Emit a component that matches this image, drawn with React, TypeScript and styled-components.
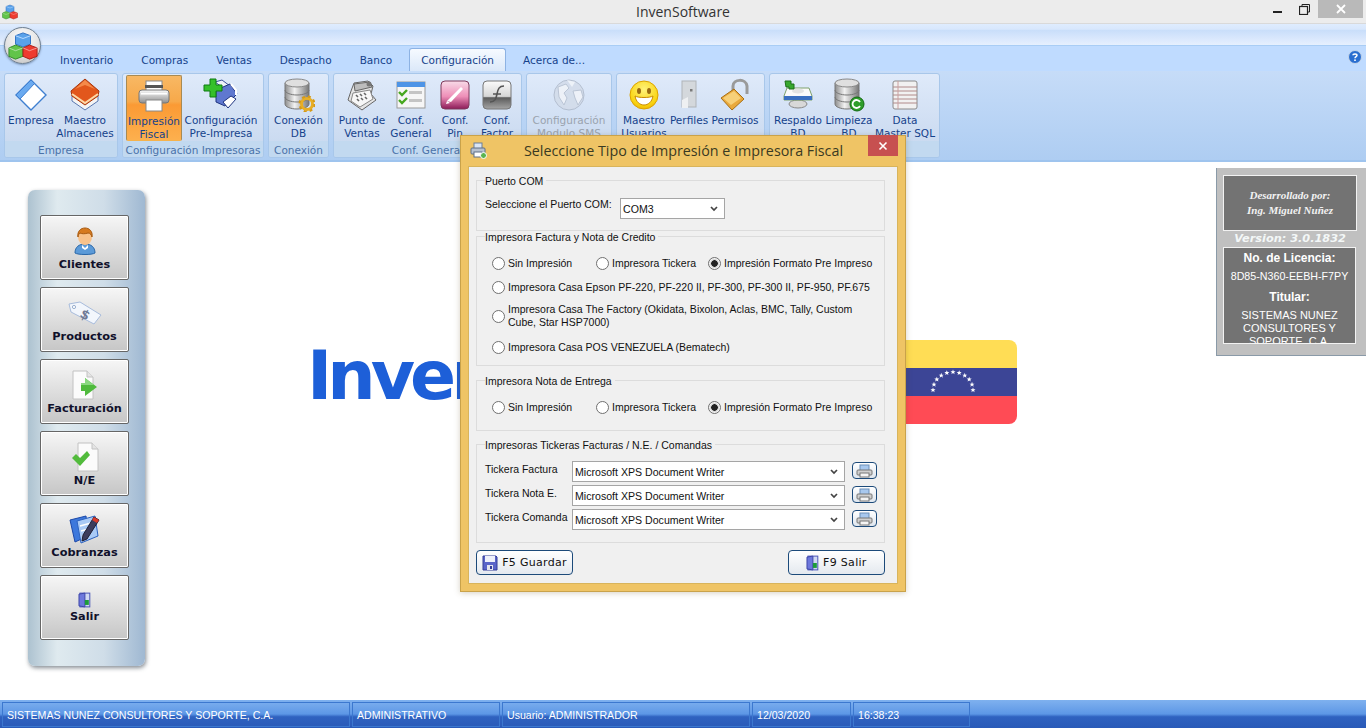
import React from "react";
import styled, { createGlobalStyle } from "styled-components";

const GlobalStyle = createGlobalStyle`
  html, body { margin: 0; padding: 0; background: #fff; overflow: hidden; }
  * { box-sizing: border-box; }
`;

/* ---------- icons ---------- */

const AppCubes = ({ size = 16 }: { size?: number }) => (
  <svg width={size} height={size} viewBox="0 0 32 32">
    <path d="M16 2l8 3v9l-8 3-8-3V5z" fill="#5aa2ea" stroke="#2f6fc0" />
    <path d="M8 15l8 3v9l-8 3-7-3v-9z" fill="#62c44a" stroke="#2f8a2a" />
    <path d="M23 15l8 3v9l-8 3-7-3v-9z" fill="#ee3b30" stroke="#a81c16" />
    <path d="M8 5l8 3 8-3" fill="none" stroke="#bcdcff" />
    <path d="M1 18l7 3 8-3M16 18l7 3 8-3" fill="none" stroke="#ffffff" strokeOpacity=".5" />
  </svg>
);

const EmpresaIcon = () => (
  <svg width="34" height="34" viewBox="0 0 34 34">
    <path d="M17 2l15 15-15 15L2 17z" fill="#fff" stroke="#3f7fd0" strokeWidth="1.4" />
    <path d="M17 2l3.5 3.5L6 21 2 17z" fill="#6aaaf0" stroke="#3f7fd0" />
  </svg>
);

const MaestroIcon = () => (
  <svg width="34" height="34" viewBox="0 0 34 34">
    <path d="M4 17v6l13 9 13-9v-6z" fill="#f4f4f4" stroke="#5a78b0" />
    <path d="M17 1L3 13l1 5 13 9 13-9 1-5z" fill="#e2571c" stroke="#a8360c" />
    <path d="M4 16l13 9 13-9" fill="none" stroke="#fcd9a8" strokeWidth="2" />
    <path d="M17 2L7 11l10-4 10 4z" fill="#f58a4a" />
  </svg>
);

const PrinterIcon = () => (
  <svg width="34" height="34" viewBox="0 0 34 34">
    <defs>
      <linearGradient id="prn" x1="0" y1="0" x2="0" y2="1">
        <stop offset="0" stopColor="#fafafa" />
        <stop offset="1" stopColor="#8f8f8f" />
      </linearGradient>
    </defs>
    <rect x="9" y="2" width="16" height="11" fill="#fff" stroke="#888" />
    <rect x="8" y="6" width="18" height="3" fill="#555" />
    <rect x="2" y="11" width="30" height="13" rx="3" fill="url(#prn)" stroke="#777" />
    <rect x="9" y="21" width="16" height="11" fill="#fff" stroke="#888" />
    <rect x="4" y="14" width="26" height="1.5" fill="#fff" />
  </svg>
);

const AddPrinterIcon = () => (
  <svg width="36" height="34" viewBox="0 0 36 34">
    <path d="M12 4l7-2 12 9-5 3z" fill="#eef2fa" stroke="#3a4f9a" />
    <path d="M13 12l14-6 7 10-12 12-9-4z" fill="#5f78d0" stroke="#1f3480" />
    <path d="M20 24l8-6 5 3-8 9z" fill="#fff" stroke="#1f3480" />
    <path d="M28 6l5 6v5" fill="none" stroke="#fff" strokeWidth="2" />
    <path d="M7 1h6v6h6v6h-6v6H7v-6H1V7h6z" fill="#35c02a" stroke="#0e7a12" />
  </svg>
);

const DbIcon = ({ badge }: { badge: "gear" | "refresh" }) => (
  <svg width="32" height="34" viewBox="0 0 32 34">
    <defs>
      <linearGradient id={"cyl" + badge} x1="0" y1="0" x2="1" y2="0">
        <stop offset="0" stopColor="#8d8d8d" />
        <stop offset=".4" stopColor="#f2f2f2" />
        <stop offset="1" stopColor="#777" />
      </linearGradient>
    </defs>
    <path d="M2 5v21c0 3 6 5 12 5s12-2 12-5V5z" fill={`url(#cyl${badge})`} stroke="#777" />
    <ellipse cx="14" cy="5" rx="12" ry="4" fill="#dfdfdf" stroke="#888" />
    <path d="M2 12c0 3 6 5 12 5s12-2 12-5M2 19c0 3 6 5 12 5s12-2 12-5" fill="none" stroke="#777" />
    {badge === "gear" ? (
      <g>
        <circle cx="24" cy="26" r="5.5" fill="none" stroke="#e8ae24" strokeWidth="3" />
        <circle cx="24" cy="26" r="7.5" fill="none" stroke="#d69a16" strokeWidth="2" strokeDasharray="3 3" />
      </g>
    ) : (
      <g>
        <circle cx="24" cy="26" r="7" fill="#2f9e2b" stroke="#126a12" />
        <path d="M27 24a4 4 0 1 0 0 4" fill="none" stroke="#fff" strokeWidth="1.8" />
      </g>
    )}
  </svg>
);

const RegisterIcon = () => (
  <svg width="32" height="32" viewBox="0 0 32 32">
    <path d="M8 4l14-2 5 5-2 8 5 6-14 10L2 21l3-9z" fill="#e4e4e4" stroke="#666" />
    <path d="M8 5l16-2 2 5-17 4z" fill="#bdbdbd" stroke="#666" />
    <path d="M7 14l17-3 3 9-13 8-9-6z" fill="#f7f7f7" stroke="#888" />
    <path d="M10 16l2 2M14 15l2 2M18 14l2 2M11 20l2 2M15 19l2 2M19 18l2 2" stroke="#666" strokeWidth="1.6" />
    <circle cx="23" cy="5" r="2.5" fill="#777" />
  </svg>
);

const ChecklistIcon = () => (
  <svg width="30" height="28" viewBox="0 0 30 28">
    <rect x="1" y="1" width="28" height="26" fill="#f6f6f6" stroke="#9a9a9a" />
    <rect x="1" y="1" width="28" height="5" fill="#4e94e6" />
    <rect x="13" y="10" width="13" height="3" fill="#c4c4c4" />
    <rect x="13" y="18" width="13" height="3" fill="#c4c4c4" />
    <path d="M3 11l3 3 5-5M3 19l3 3 5-5" fill="none" stroke="#46a71f" strokeWidth="2.4" />
  </svg>
);

const PinIcon = () => (
  <svg width="30" height="30" viewBox="0 0 30 30">
    <defs>
      <linearGradient id="pin" x1="0" y1="0" x2="0" y2="1">
        <stop offset="0" stopColor="#f8dbe8" />
        <stop offset=".55" stopColor="#ee8fb8" />
        <stop offset="1" stopColor="#8c1b58" />
      </linearGradient>
    </defs>
    <rect x="1" y="1" width="28" height="28" rx="4" fill="url(#pin)" stroke="#7d3a5c" />
    <path d="M7 21L21 7l2 2L11 22z" fill="#fff" />
    <path d="M7 21l-1 3 4-1" fill="#fff" />
  </svg>
);

const FlashIcon = () => (
  <svg width="30" height="30" viewBox="0 0 30 30">
    <defs>
      <linearGradient id="fls" x1="0" y1="0" x2="0" y2="1">
        <stop offset="0" stopColor="#fbfbfb" />
        <stop offset=".55" stopColor="#d6d6d6" />
        <stop offset=".6" stopColor="#5c5c5c" />
        <stop offset="1" stopColor="#a5a5a5" />
      </linearGradient>
    </defs>
    <rect x="1" y="1" width="28" height="28" rx="4" fill="url(#fls)" stroke="#777" />
    <path d="M22 6c-5 0-6 3-7 8s-2 8-7 8M11 14h8" fill="none" stroke="#555" strokeWidth="1.6" />
  </svg>
);

const GlobeIcon = () => (
  <svg width="34" height="34" viewBox="0 0 34 34">
    <circle cx="17" cy="17" r="15" fill="#d3dcea" stroke="#aeb9ca" />
    <path d="M6 9l8-3 3 4-5 5 3 5-3 7-5-8zM21 13l8-1 2 7-5 8-3-7z" fill="#f1f4f9" stroke="#b6c0d0" />
    <path d="M15 2l8 2-3 5z" fill="#f1f4f9" />
  </svg>
);

const SmileyIcon = () => (
  <svg width="30" height="30" viewBox="0 0 30 30">
    <defs>
      <radialGradient id="smi" cx=".5" cy=".3" r=".8">
        <stop offset="0" stopColor="#fff27a" />
        <stop offset=".7" stopColor="#f9d410" />
        <stop offset="1" stopColor="#e8a500" />
      </radialGradient>
    </defs>
    <circle cx="15" cy="15" r="14" fill="url(#smi)" stroke="#dca300" />
    <ellipse cx="10" cy="11" rx="2" ry="3" fill="#9a6a10" />
    <ellipse cx="20" cy="11" rx="2" ry="3" fill="#9a6a10" />
    <path d="M6 16c3 2 15 2 18 0-1 6-5 9-9 9s-8-3-9-9z" fill="#fff" stroke="#c98a00" />
  </svg>
);

const DoorGreyIcon = () => (
  <svg width="16" height="30" viewBox="0 0 16 30">
    <rect x="1" y="1" width="14" height="26" fill="#d4d8dc" stroke="#b0b4b8" />
    <path d="M1 20l6-3v11H1z" fill="#eef0f2" />
    <rect x="9" y="9" width="2.5" height="2.5" fill="#7a7a7a" />
  </svg>
);

const LockIcon = () => (
  <svg width="30" height="34" viewBox="0 0 30 34">
    <path d="M13 14V8c0-7 13-8 14 0v8" fill="none" stroke="#9a9a9a" strokeWidth="3" />
    <path d="M1 20l13-9 10 10-12 11z" fill="#e9a93c" stroke="#a86f14" />
    <path d="M3 20l11-7 7 7-10 7z" fill="#f7d078" />
  </svg>
);

const BackupIcon = () => (
  <svg width="30" height="30" viewBox="0 0 30 30">
    <ellipse cx="15" cy="24" rx="9" ry="4" fill="#d8d8d8" stroke="#888" />
    <path d="M4 8h22l3 8v4H1v-4z" fill="#fafafa" stroke="#7da06a" />
    <path d="M1 16h28v4H1z" fill="#3a6fc0" />
    <ellipse cx="15" cy="11" rx="6" ry="2.5" fill="#e3e3e3" />
    <path d="M2 1h6v3h3v5H6V7H3z" fill="#37a82e" stroke="#1c6e18" />
  </svg>
);

const NotepadIcon = () => (
  <svg width="28" height="30" viewBox="0 0 28 30">
    <rect x="2" y="1" width="24" height="28" rx="2" fill="#f1f1f1" stroke="#8a8a8a" />
    <path d="M2 7h24M2 11h24M2 15h24M2 19h24M2 23h24" stroke="#b08a8a" />
    <path d="M7 1v28" stroke="#c9a0a0" />
  </svg>
);

const UserIcon = () => (
  <svg width="22" height="28" viewBox="0 0 22 28">
    <path d="M1 26c0-6 4-9 10-9s10 3 10 9c-3 2-17 2-20 0z" fill="#5b9ad8" stroke="#2a67a8" />
    <path d="M8 18l3 3 3-3v3l-3 2-3-2z" fill="#fff" />
    <ellipse cx="11" cy="10" rx="7" ry="8" fill="#f8c28a" />
    <path d="M4 10c-1-6 3-9 7-9s8 3 7 9c-1-3-2-4-4-4-3 1-6 1-8 0-1 1-2 2-2 4z" fill="#d67a1e" stroke="#a85a10" />
  </svg>
);

const TagIcon = () => (
  <svg width="34" height="24" viewBox="0 0 34 24">
    <path d="M1 3l11-2 21 13-7 9L3 11z" fill="#f2f6fc" stroke="#a8bcdc" />
    <circle cx="6" cy="6" r="1.6" fill="#fff" stroke="#9ab0d0" />
    <text x="13" y="18" fontFamily="DejaVu Sans" fontWeight="700" fontSize="13" fill="#6f7a95" transform="rotate(30 17 13)">$</text>
  </svg>
);

const DocArrowIcon = () => (
  <svg width="26" height="30" viewBox="0 0 26 30">
    <path d="M1 1h14l6 6v22H1z" fill="#fbfbfb" stroke="#c2c2c2" />
    <path d="M15 1v6h6" fill="#e4e4e4" stroke="#c2c2c2" />
    <path d="M9 13h4V8l12 9-12 9v-5H9z" fill="#4fba3d" />
    <path d="M9 13h4V8l9 7H9z" fill="#8ad880" />
  </svg>
);

const DocCheckIcon = () => (
  <svg width="28" height="30" viewBox="0 0 28 30">
    <path d="M7 1h14l6 6v22H7z" fill="#fbfbfb" stroke="#c2c2c2" />
    <path d="M21 1v6h6" fill="#e4e4e4" stroke="#c2c2c2" />
    <path d="M1 16l4-4 4 4 7-7 3 4-10 11z" fill="#52bb3c" />
  </svg>
);

const CobranzasIcon = () => (
  <svg width="32" height="32" viewBox="0 0 32 32">
    <path d="M1 7l16-4 2 20-13 6z" fill="#3d78dc" stroke="#1c48a8" />
    <path d="M8 8l18-5 3 20-17 7z" fill="#a9caf6" stroke="#2c62c0" />
    <path d="M11 13l11-3M12 18l11-3M13 23l7-2" stroke="#fff" strokeWidth="1.5" />
    <path d="M25 4l5 3-12 19-5 2 1-6z" fill="#3c3c5c" stroke="#1d1d33" />
    <path d="M25 4l5 3-2 3-5-3z" fill="#d83a2a" />
  </svg>
);

const DoorIcon = ({ size = 16 }: { size?: number }) => (
  <svg width={size * 0.8} height={size} viewBox="0 0 13 16">
    <rect x="2" y="1" width="10" height="14" fill="#cfd8f2" stroke="#4a55b8" />
    <path d="M1 2l6-1v14l-6-1z" fill="#6d78dc" stroke="#3d46a8" />
    <rect x="7" y="8" width="4" height="5" fill="#1d9c3a" />
  </svg>
);

const FloppyIcon = () => (
  <svg width="16" height="16" viewBox="0 0 16 16">
    <path d="M1 1h13l1 1v13H1z" fill="#5a64c8" stroke="#343c98" />
    <rect x="3" y="1" width="10" height="6" fill="#eef0fa" />
    <rect x="5" y="10" width="6" height="5" fill="#e4e4ec" />
    <rect x="8" y="11" width="2" height="3" fill="#343c98" />
  </svg>
);

const SmallPrinter = () => (
  <svg width="17" height="14" viewBox="0 0 17 14">
    <rect x="4" y="1" width="9" height="6" fill="#a8c8ee" stroke="#6d8fb8" />
    <rect x="1" y="6" width="15" height="5" rx="1" fill="#d0d0d0" stroke="#777" />
    <rect x="4" y="9" width="9" height="4" fill="#f5f5f5" stroke="#777" />
  </svg>
);

const TitlePrinter = () => (
  <svg width="17" height="17" viewBox="0 0 17 17">
    <rect x="4" y="1" width="8" height="6" fill="#dbe6f4" stroke="#6a7f9c" />
    <rect x="1" y="6" width="14" height="6" rx="1" fill="#b7c1cf" stroke="#5f6f86" />
    <rect x="4" y="10" width="8" height="5" fill="#fff" stroke="#5f6f86" />
    <circle cx="13.5" cy="13.5" r="3" fill="#5bb450" stroke="#fff" />
  </svg>
);

const Chevron = () => (
  <svg width="8" height="6" viewBox="0 0 8 6">
    <path d="M1 1l3 3 3-3" fill="none" stroke="#444" strokeWidth="1.7" />
  </svg>
);

const HelpIcon = () => (
  <svg width="14" height="14" viewBox="0 0 14 14">
    <circle cx="7" cy="7" r="6.5" fill="#2a6fd0" stroke="#c4d4e8" />
    <path d="M5 5.3C5 3.4 9 3.4 9 5.3 9 6.6 7 6.6 7 8.2" fill="none" stroke="#fff" strokeWidth="1.5" />
    <rect x="6.2" y="9.4" width="1.6" height="1.6" fill="#fff" />
  </svg>
);

const FlagArt = () => {
  const stars = Array.from({ length: 11 }, (_, i) => {
    const a = Math.PI - (i * Math.PI) / 10;
    return { x: 64 + Math.cos(a) * 20, y: 50 - Math.sin(a) * 18 };
  });
  return (
    <svg width="128" height="84" viewBox="0 0 128 84">
      <path d="M0 0h120a8 8 0 0 1 8 8v20H0z" fill="#ffdd55" />
      <rect y="28" width="128" height="28" fill="#3c4596" />
      <path d="M0 56h128v20a8 8 0 0 1-8 8H0z" fill="#ff4b55" />
      {stars.map((s, i) => (
        <path
          key={i}
          transform={`translate(${s.x} ${s.y})`}
          d="M0-2.6L.7-.8 2.5-.8 1.1.4 1.6 2.2 0 1.1-1.6 2.2-1.1.4-2.5-.8-.7-.8z"
          fill="#fff"
        />
      ))}
    </svg>
  );
};

/* ---------- data ---------- */

const tabs = ["Inventario", "Compras", "Ventas", "Despacho", "Banco", "Configuración", "Acerca de..."];

type RibbonItem = { label: React.ReactNode; w: number; icon: React.ReactNode; active?: boolean; off?: boolean };
type RibbonGroupData = { title: string; w: number; pad: number; items: RibbonItem[] };

const groups: RibbonGroupData[] = [
  {
    title: "Empresa", w: 114, pad: 0,
    items: [
      { label: "Empresa", w: 52, icon: <EmpresaIcon /> },
      { label: <>Maestro<br />Almacenes</>, w: 56, icon: <MaestroIcon /> },
    ],
  },
  {
    title: "Configuración Impresoras", w: 142, pad: 3,
    items: [
      { label: <>Impresión<br />Fiscal</>, w: 56, icon: <PrinterIcon />, active: true },
      { label: <>Configuración<br />Pre-Impresa</>, w: 78, icon: <AddPrinterIcon /> },
    ],
  },
  {
    title: "Conexión", w: 61, pad: 0,
    items: [{ label: <>Conexión<br />DB</>, w: 59, icon: <DbIcon badge="gear" /> }],
  },
  {
    title: "Conf. General", w: 189, pad: 2,
    items: [
      { label: <>Punto de<br />Ventas</>, w: 52, icon: <RegisterIcon /> },
      { label: <>Conf.<br />General</>, w: 46, icon: <ChecklistIcon /> },
      { label: <>Conf.<br />Pin</>, w: 42, icon: <PinIcon /> },
      { label: <>Conf.<br />Factor</>, w: 42, icon: <FlashIcon /> },
    ],
  },
  {
    title: "SMS", w: 86, pad: 1,
    items: [{ label: <>Configuración<br />Modulo SMS</>, w: 82, icon: <GlobeIcon />, off: true }],
  },
  {
    title: "Usuarios", w: 149, pad: 1,
    items: [
      { label: <>Maestro<br />Usuarios</>, w: 52, icon: <SmileyIcon /> },
      { label: "Perfiles", w: 38, icon: <DoorGreyIcon /> },
      { label: "Permisos", w: 54, icon: <LockIcon /> },
    ],
  },
  {
    title: "Respaldo", w: 171, pad: 0,
    items: [
      { label: <>Respaldo<br />BD</>, w: 56, icon: <BackupIcon /> },
      { label: <>Limpieza<br />BD</>, w: 46, icon: <DbIcon badge="refresh" /> },
      { label: <>Data<br />Master SQL</>, w: 66, icon: <NotepadIcon /> },
    ],
  },
];

const sideButtons = [
  { label: "Clientes", icon: <UserIcon /> },
  { label: "Productos", icon: <TagIcon /> },
  { label: "Facturación", icon: <DocArrowIcon /> },
  { label: "N/E", icon: <DocCheckIcon /> },
  { label: "Cobranzas", icon: <CobranzasIcon /> },
  { label: "Salir", icon: <DoorIcon />, compact: true },
];

const statusCells = [
  { text: "SISTEMAS NUNEZ CONSULTORES Y SOPORTE, C.A.", w: 348 },
  { text: "ADMINISTRATIVO", w: 148 },
  { text: "Usuario: ADMINISTRADOR", w: 248 },
  { text: "12/03/2020", w: 99 },
  { text: "16:38:23", w: 117 },
];

const tickeras = ["Tickera Factura", "Tickera Nota E.", "Tickera Comanda"];

/* ---------- app ---------- */

const PrintOptions = ({ name }: { name: string }) => (
  <OptionRow>
    <RadioLabel><Radio name={name} />Sin Impresión</RadioLabel>
    <RadioLabel><Radio name={name} />Impresora Tickera</RadioLabel>
    <RadioLabel><Radio name={name} defaultChecked />Impresión Formato Pre Impreso</RadioLabel>
  </OptionRow>
);

const App = () => {
  return (
    <Page>
      <GlobalStyle />
      <TitleBar>
        <TitleIcon><AppCubes /></TitleIcon>
        <TitleText>InvenSoftware</TitleText>
        <WindowButtons>
          <WinButton>
            <svg width="10" height="10" viewBox="0 0 10 10"><rect y="7" width="9" height="2" fill="#222" /></svg>
          </WinButton>
          <WinButton>
            <svg width="11" height="11" viewBox="0 0 11 11">
              <path d="M3 2.5V.5h7.5V8H8.5" fill="none" stroke="#222" />
              <rect x=".5" y="2.5" width="8" height="8" fill="none" stroke="#222" strokeWidth="1.2" />
            </svg>
          </WinButton>
          <WinClose>
            <svg width="10" height="10" viewBox="0 0 10 10"><path d="M1 1l8 8M9 1l-8 8" stroke="#fff" strokeWidth="1.8" /></svg>
          </WinClose>
        </WindowButtons>
      </TitleBar>

      <QuickBar />
      <Orb><AppCubes size={30} /></Orb>

      <TabStrip>
        {tabs.map((t) => (
          <Tab key={t} $active={t === "Configuración"}>{t}</Tab>
        ))}
        <HelpSlot><HelpIcon /></HelpSlot>
      </TabStrip>

      <Ribbon>
        {groups.map((g) => (
          <RibbonGroup key={g.title} $w={g.w}>
            <GroupBody $pad={g.pad}>
              {g.items.map((it, i) => (
                <RibbonButton key={i} $w={it.w} $active={it.active} $off={it.off}>
                  <RibbonIcon $off={it.off}>{it.icon}</RibbonIcon>
                  <span>{it.label}</span>
                </RibbonButton>
              ))}
            </GroupBody>
            <GroupTitle>{g.title}</GroupTitle>
          </RibbonGroup>
        ))}
      </Ribbon>

      <Main>
        <Sidebar>
          {sideButtons.map((b) => (
            <SideButton key={b.label} $compact={b.compact}>
              <SideIcon $compact={b.compact}>{b.icon}</SideIcon>
              {b.label}
            </SideButton>
          ))}
        </Sidebar>

        <Logo>
          <LogoText>InvenSoftware</LogoText>
          <FlagArt />
        </Logo>

        <LicenseBox>
          <DevPanel>Desarrollado por:<br />Ing. Miguel Nuñez</DevPanel>
          <Version>Version: 3.0.1832</Version>
          <LicensePanel>
            <LicenseHead>No. de Licencia:</LicenseHead>
            <LicenseText>8D85-N360-EEBH-F7PY</LicenseText>
            <LicenseHead $top={7}>Titular:</LicenseHead>
            <LicenseText $top={5} $big>SISTEMAS NUNEZ CONSULTORES Y SOPORTE, C.A.</LicenseText>
          </LicensePanel>
        </LicenseBox>
      </Main>

      <StatusBar>
        {statusCells.map((c) => (
          <StatusCell key={c.text} $w={c.w}>{c.text}</StatusCell>
        ))}
      </StatusBar>

      <Dialog>
        <DialogHead>
          <DialogIcon><TitlePrinter /></DialogIcon>
          <DialogTitle>Seleccione Tipo de Impresión e Impresora Fiscal</DialogTitle>
          <DialogClose>
            <svg width="10" height="10" viewBox="0 0 10 10"><path d="M1.5 1.5l7 7M8.5 1.5l-7 7" stroke="#fff" strokeWidth="1.6" /></svg>
          </DialogClose>
        </DialogHead>
        <DialogBody>
          <Box $h={57} $mt={0}>
            <Legend>Puerto COM</Legend>
            <ComRow>
              <ComLabel>Seleccione el Puerto COM:</ComLabel>
              <Combo $w={105}>COM3<Chevron /></Combo>
            </ComRow>
          </Box>

          <Box $h={136} $mt={-1}>
            <Legend>Impresora Factura y Nota de Credito</Legend>
            <Options $top={13}>
              <PrintOptions name="factura" />
              <RadioLabel $mt={8}><Radio name="factura" />Impresora Casa Epson PF-220, PF-220 II, PF-300, PF-300 II, PF-950, PF.675</RadioLabel>
              <RadioLabel $mt={8} $wrap>
                <Radio name="factura" />
                <span>Impresora Casa The Factory (Okidata, Bixolon, Aclas, BMC, Tally, Custom Cube, Star HSP7000)</span>
              </RadioLabel>
              <RadioLabel $mt={10}><Radio name="factura" />Impresora Casa POS VENEZUELA (Bematech)</RadioLabel>
            </Options>
          </Box>

          <Box $h={57} $mt={8}>
            <Legend>Impresora Nota de Entrega</Legend>
            <Options $top={13}>
              <PrintOptions name="nota" />
            </Options>
          </Box>

          <Box $h={105} $mt={7}>
            <Legend>Impresoras Tickeras Facturas / N.E. / Comandas</Legend>
            <TickeraList>
              {tickeras.map((t) => (
                <TickeraRow key={t}>
                  <TickeraLabel>{t}</TickeraLabel>
                  <Combo $w={273}>Microsoft XPS Document Writer<Chevron /></Combo>
                  <MiniButton><SmallPrinter /></MiniButton>
                </TickeraRow>
              ))}
            </TickeraList>
          </Box>

          <DialogFooter>
            <ActionButton $w={97}><FloppyIcon />F5 Guardar</ActionButton>
            <ActionButton $w={97}><DoorIcon />F9 Salir</ActionButton>
          </DialogFooter>
        </DialogBody>
      </Dialog>
    </Page>
  );
};

export default App;

/* ---------- styles ---------- */

const uiFont = `"DejaVu Sans", sans-serif`;
const dlgFont = `"Liberation Sans", Arial, sans-serif`;

const Page = styled.div`
  position: relative;
  width: 1366px;
  height: 728px;
  display: flex;
  flex-direction: column;
  overflow: hidden;
  background: #fff;
  font-family: ${uiFont};
`;

const TitleBar = styled.div`
  height: 24px;
  display: flex;
  align-items: center;
  background: #ececec;
  border-bottom: 1px solid #d9d9d9;
`;

const TitleIcon = styled.div`
  width: 20px;
  padding-left: 2px;
  display: flex;
`;

const TitleText = styled.div`
  flex: 1;
  text-align: center;
  padding-left: 81px;
  font: 14px "Open Sans", sans-serif;
  color: #333;
`;

const WindowButtons = styled.div`
  display: flex;
  align-self: flex-start;
  margin-right: 3px;
`;

const WinButton = styled.div`
  width: 26px;
  height: 18px;
  display: flex;
  align-items: center;
  justify-content: center;
`;

const WinClose = styled.div`
  width: 45px;
  height: 18px;
  margin-left: 1px;
  background: #b9b9b9;
  display: flex;
  align-items: center;
  justify-content: center;
`;

const QuickBar = styled.div`
  height: 22px;
  background: linear-gradient(#dfecfe 0%, #d8e7fc 25%, #c9defa 30%, #dce9fd 75%, #e6f0fe 100%);
  border-bottom: 1px solid #a9cdf5;
`;

const Orb = styled.div`
  position: absolute;
  z-index: 2;
  left: 4px;
  top: 27px;
  width: 37px;
  height: 37px;
  border-radius: 50%;
  display: flex;
  align-items: center;
  justify-content: center;
  background: radial-gradient(circle at 50% 30%, #fdfdfd 0%, #e3e3e3 55%, #bdbdbd 100%);
  border: 1px solid #6f7f90;
  box-shadow: 0 1px 2px rgba(60, 80, 110, 0.5);
`;

const TabStrip = styled.div`
  height: 25px;
  display: flex;
  align-items: flex-end;
  gap: 6px;
  padding-left: 49px;
  background: #bfdbff;
  position: relative;
`;

const Tab = styled.div<{ $active?: boolean }>`
  height: 23px;
  padding: 0 11px;
  display: flex;
  align-items: center;
  font-size: 10.5px;
  color: #15428b;
  border-radius: 3px 3px 0 0;
  ${(p) =>
    p.$active &&
    `
    background: linear-gradient(#f6faff, #dbe8f9);
    border: 1px solid #8db2e3;
    border-bottom: none;
  `}
`;

const HelpSlot = styled.div`
  position: absolute;
  right: 4px;
  top: 4px;
  display: flex;
`;

const Ribbon = styled.div`
  height: 91px;
  display: flex;
  gap: 4px;
  padding: 2px 0 0 4px;
  background: linear-gradient(#c6dcf8, #aecdf2);
  border-bottom: 2px solid #9fc4ee;
`;

const RibbonGroup = styled.div<{ $w: number }>`
  width: ${(p) => p.$w}px;
  height: 85px;
  display: flex;
  flex-direction: column;
  border: 1px solid #a8c7ea;
  border-radius: 3px;
  overflow: hidden;
  background: linear-gradient(#dfeafa, #c6d7ee);
`;

const GroupBody = styled.div<{ $pad: number }>`
  flex: 1;
  display: flex;
  padding: 1px 0 0 ${(p) => p.$pad}px;
`;

const RibbonButton = styled.div<{ $w: number; $active?: boolean; $off?: boolean }>`
  width: ${(p) => p.$w}px;
  height: 66px;
  flex: none;
  display: flex;
  flex-direction: column;
  align-items: center;
  text-align: center;
  font-size: 10.5px;
  line-height: 13px;
  white-space: nowrap;
  color: ${(p) => (p.$off ? "#9aa3ae" : "#15428b")};
  ${(p) =>
    p.$active &&
    `
    background: linear-gradient(#f8b864 0%, #f7a94a 40%, #fb9a34 45%, #fdb04e 100%);
    border: 1px solid #a88a52;
    border-bottom-color: #f5b24c;
    border-radius: 2px;
  `}
`;

const RibbonIcon = styled.div<{ $off?: boolean }>`
  height: 39px;
  flex: none;
  display: flex;
  align-items: center;
  justify-content: center;
  opacity: ${(p) => (p.$off ? 0.85 : 1)};
`;

const GroupTitle = styled.div`
  height: 16px;
  background: #c2d9f0;
  text-align: center;
  font-size: 10.5px;
  line-height: 18px;
  color: #4a72a8;
  white-space: nowrap;
`;

const Main = styled.div`
  flex: 1;
  display: flex;
  align-items: flex-start;
  background: #fff;
`;

const Sidebar = styled.div`
  width: 117px;
  height: 476px;
  margin: 28px 0 0 28px;
  padding: 25px 0 0 12px;
  flex: none;
  display: flex;
  flex-direction: column;
  gap: 7px;
  border-radius: 7px;
  background: linear-gradient(90deg, #adc2d0 0%, #dfeaef 25%, #cfdde8 65%, #9fb8d2 100%);
  box-shadow: 1px 2px 4px rgba(70, 80, 90, 0.65);
`;

const SideButton = styled.div<{ $compact?: boolean }>`
  width: 89px;
  height: 65px;
  flex: none;
  display: flex;
  flex-direction: column;
  align-items: center;
  justify-content: ${(p) => (p.$compact ? "center" : "flex-end")};
  padding-bottom: ${(p) => (p.$compact ? "2px" : "8px")};
  border: 1px solid #666;
  border-radius: 2px;
  box-shadow: inset 0 0 0 1px #fff;
  background: linear-gradient(#f6f6f6, #c6c6c6);
  font-size: 11.3px;
  font-weight: 700;
  color: #10102a;
  white-space: nowrap;
`;

const SideIcon = styled.div<{ $compact?: boolean }>`
  height: ${(p) => (p.$compact ? "20px" : "34px")};
  display: flex;
  align-items: center;
  justify-content: center;
`;

const Logo = styled.div`
  margin: 178px 0 0 162px;
  display: flex;
  flex: none;
`;

const LogoText = styled.div`
  width: 582px;
  height: 84px;
  overflow: hidden;
  white-space: nowrap;
  font: 700 68px/72px "DejaVu Sans", sans-serif;
  letter-spacing: -5px;
  color: #1d5fd8;
`;

const LicenseBox = styled.div`
  margin: 6px 0 0 auto;
  width: 150px;
  height: 188px;
  padding: 7px 0 0 6px;
  flex: none;
  background: #c0c0c0;
  border-left: 1px solid #8a9aa8;
  border-bottom: 1px solid #8a9aa8;
  display: flex;
  flex-direction: column;
  align-items: flex-start;
`;

const DevPanel = styled.div`
  width: 134px;
  height: 56px;
  display: flex;
  align-items: center;
  justify-content: center;
  text-align: center;
  background: #737373;
  border: 1px solid #f2f2f2;
  font: italic 700 11px/15px "Liberation Serif", serif;
  color: #f2f2f2;
`;

const Version = styled.div`
  width: 134px;
  height: 16px;
  text-align: center;
  font: italic 700 11.3px/15px "DejaVu Sans", sans-serif;
  color: #f3f7f7;
`;

const LicensePanel = styled.div`
  width: 133px;
  height: 97px;
  overflow: hidden;
  padding-top: 3px;
  text-align: center;
  background: #737373;
  border: 1px solid #f2f2f2;
  color: #fff;
  font-family: ${dlgFont};
`;

const LicenseHead = styled.div<{ $top?: number }>`
  margin-top: ${(p) => p.$top ?? 0}px;
  font-size: 12px;
  font-weight: 700;
  line-height: 14px;
`;

const LicenseText = styled.div<{ $top?: number; $big?: boolean }>`
  margin-top: ${(p) => p.$top ?? 5}px;
  padding: 0 12px;
  margin-left: ${(p) => (p.$big ? "0" : "-12px")};
  margin-right: ${(p) => (p.$big ? "0" : "-12px")};
  font-size: ${(p) => (p.$big ? "11px" : "10.7px")};
  line-height: 13px;
`;

const StatusBar = styled.div`
  height: 28px;
  display: flex;
  gap: 2px;
  padding: 2px 0 1px 2px;
  background: linear-gradient(#7fb1ef 0%, #5d97e6 50%, #2f62c0 60%, #2a5ab8 100%);
`;

const StatusCell = styled.div<{ $w: number }>`
  width: ${(p) => p.$w}px;
  height: 25px;
  padding: 0 4px;
  display: flex;
  align-items: center;
  border: 1px solid #3c78cf;
  font: 10.6px ${dlgFont};
  color: #fff;
  white-space: nowrap;
`;

const Dialog = styled.div`
  position: absolute;
  left: 460px;
  top: 135px;
  width: 446px;
  height: 457px;
  display: flex;
  flex-direction: column;
  padding: 0 7px 7px;
  background: #efc465;
  border: 1px solid #c9a24a;
  box-shadow: 0 1px 6px rgba(90, 70, 20, 0.25);
`;

const DialogHead = styled.div`
  height: 30px;
  flex: none;
  display: flex;
  align-items: flex-start;
  position: relative;
`;

const DialogIcon = styled.div`
  padding: 6px 0 0 2px;
  display: flex;
`;

const DialogTitle = styled.div`
  flex: 1;
  text-align: center;
  padding: 5px 18px 0 0;
  font: 14.3px "Open Sans", sans-serif;
  color: #3a3a22;
  white-space: nowrap;
`;

const DialogClose = styled.div`
  position: absolute;
  right: 0;
  top: -1px;
  width: 30px;
  height: 21px;
  background: #c75050;
  display: flex;
  align-items: center;
  justify-content: center;
`;

const DialogBody = styled.div`
  flex: 1;
  padding: 7px 12px 0 7px;
  background: #f0f0f0;
  border: 1px solid #d8b45c;
  font: 10.5px ${dlgFont};
  color: #111;
`;

const Box = styled.fieldset<{ $h: number; $mt: number }>`
  height: ${(p) => p.$h}px;
  margin: ${(p) => p.$mt}px 0 0;
  padding: 0 0 0 8px;
  min-width: 0;
  border: 1px solid #dcdcdc;
`;

const Legend = styled.legend`
  position: relative;
  top: 1px;
  padding: 0 3px 0 0;
  line-height: 12px;
  font-size: 10.5px;
`;

const ComRow = styled.div`
  margin-top: 12px;
  display: flex;
`;

const ComLabel = styled.div`
  width: 135px;
  line-height: 13px;
`;

const Combo = styled.div<{ $w: number }>`
  width: ${(p) => p.$w}px;
  height: 21px;
  flex: none;
  padding: 0 6px 0 2px;
  display: flex;
  align-items: center;
  justify-content: space-between;
  background: #fff;
  border: 1px solid #a5a5a5;
  font-size: 10.6px;
`;

const Options = styled.div<{ $top?: number }>`
  padding: ${(p) => p.$top ?? 12}px 8px 0 7px;
  display: flex;
  flex-direction: column;
`;

const OptionRow = styled.div`
  display: grid;
  grid-template-columns: 104px 112px auto;
`;

const RadioLabel = styled.label<{ $mt?: number; $wrap?: boolean }>`
  min-height: 16px;
  margin-top: ${(p) => p.$mt ?? 0}px;
  display: flex;
  align-items: center;
  gap: 3px;
  line-height: 13px;
  white-space: ${(p) => (p.$wrap ? "normal" : "nowrap")};
`;

const Radio = styled.input.attrs({ type: "radio" })`
  appearance: none;
  width: 13px;
  height: 13px;
  margin: 0;
  flex: none;
  border: 1px solid #707070;
  border-radius: 50%;
  background: #fff;
  &:checked {
    background: radial-gradient(circle, #222 0 3px, #c8c8c8 3.5px, #f4f4f4 5px);
  }
`;

const TickeraList = styled.div`
  margin-top: 11px;
  display: flex;
  flex-direction: column;
  gap: 3px;
`;

const TickeraRow = styled.div`
  display: flex;
  align-items: flex-start;
`;

const TickeraLabel = styled.div`
  width: 87px;
  line-height: 13px;
  padding-top: 2px;
  white-space: nowrap;
`;

const MiniButton = styled.div`
  width: 25px;
  height: 17px;
  margin: 1px 0 0 7px;
  display: flex;
  align-items: center;
  justify-content: center;
  border: 1px solid #1c4a7a;
  border-radius: 4px;
  background: linear-gradient(#fff, #dfe6ee);
`;

const DialogFooter = styled.div`
  margin-top: 7px;
  display: flex;
  justify-content: space-between;
`;

const ActionButton = styled.div<{ $w: number }>`
  width: ${(p) => p.$w}px;
  height: 25px;
  display: flex;
  align-items: center;
  justify-content: center;
  gap: 4px;
  border: 1px solid #1c4a7a;
  border-radius: 4px;
  background: linear-gradient(#ffffff, #e4e9ef);
  font: 11px ${uiFont};
  letter-spacing: 0.3px;
  color: #111;
`;
